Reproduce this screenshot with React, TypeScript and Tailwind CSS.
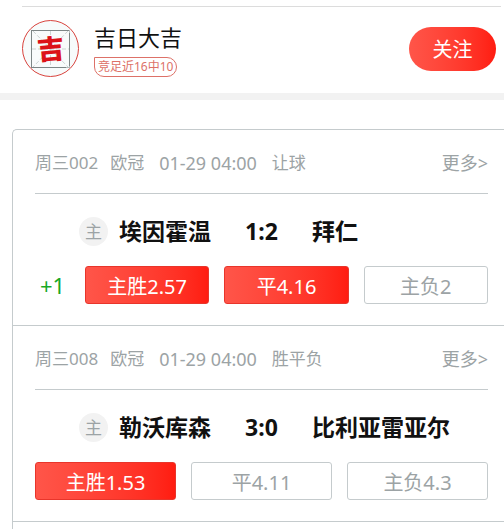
interface Option {
  label: string;
  picked?: boolean;
}

interface Match {
  id: string;
  league: string;
  time: string;
  type: string;
  home: string;
  away: string;
  score: string;
  handicap?: string;
  options: Option[];
}

const matches: Match[] = [
  {
    id: "周三002",
    league: "欧冠",
    time: "01-29 04:00",
    type: "让球",
    home: "埃因霍温",
    away: "拜仁",
    score: "1:2",
    handicap: "+1",
    options: [{ label: "主胜2.57", picked: true }, { label: "平4.16", picked: true }, { label: "主负2" }],
  },
  {
    id: "周三008",
    league: "欧冠",
    time: "01-29 04:00",
    type: "胜平负",
    home: "勒沃库森",
    away: "比利亚雷亚尔",
    score: "3:0",
    options: [{ label: "主胜1.53", picked: true }, { label: "平4.11" }, { label: "主负4.3" }],
  },
];

function Avatar() {
  return (
    <svg viewBox="0 0 57 57" className="w-[57px] h-[57px] shrink-0" role="img" aria-label="吉日大吉">
      <circle cx="28.5" cy="28.5" r="28" fill="#f7fbfb" stroke="#d8433d" />
      {/* practice-paper grid */}
      <rect x="9.5" y="10.5" width="38" height="37" fill="#f8fbfb" stroke="#b4bcbc" />
      <path d="M10 10.5H47M9.5 10V48M10 47.5H44M47.5 13V46" stroke="#7d8686" fill="none" />
      <path d="M10 29H47M28.5 11V47M11 11L46 47M46 11L11 47" stroke="#cbd3d3" strokeDasharray="4 2" fill="none" />
      <text
        x="28.5"
        y="39"
        textAnchor="middle"
        fontSize="27"
        fontWeight="900"
        fill="#dc1218"
        transform="rotate(-5 28.5 28.5)"
      >
        吉
      </text>
    </svg>
  );
}

function OptionButton({ label, picked }: Option) {
  return (
    <button
      type="button"
      className={
        picked
          ? "h-[38px] rounded-[3px] border border-[#e8352b] bg-linear-to-r from-[#ff5549] to-[#ff1c10] pt-1 text-xl leading-none text-white"
          : "h-[38px] rounded-[3px] border border-[#c5cbcd] bg-white pt-1 text-xl leading-none text-[#9ca3a5]"
      }
    >
      {label}
    </button>
  );
}

function MatchRow({ match }: { match: Match }) {
  return (
    <article className="border-b border-[#c5cbcd] pl-[22px] pr-4 pb-[21px]">
      <div className="flex h-16 items-center border-b border-[#c5cbcd] pt-[3px] text-[17px] text-[#9ca3a5]">
        <span>{match.id}</span>
        <span className="ml-3">{match.league}</span>
        <span className="ml-[15px] text-lg">{match.time}</span>
        <span className="ml-[15px]">{match.type}</span>
        <a href="#" className="ml-auto text-lg">更多&gt;</a>
      </div>

      <div className="mt-[23px] flex h-[29px] items-center pl-11 text-[23px] font-bold text-[#111]">
        <span className="flex size-[29px] items-center justify-center rounded-full bg-[#f2f2f2] text-[17px] font-normal text-[#9ca3a5]">
          主
        </span>
        <span className="ml-[11px]">{match.home}</span>
        <span className="w-[101px] text-center">{match.score}</span>
        <span>{match.away}</span>
      </div>

      <div className="mt-5 flex items-center">
        {match.handicap && (
          <span className="w-[50px] shrink-0 pl-[5px] text-[22px] leading-none text-[#18a826]">{match.handicap}</span>
        )}
        <div className="grid flex-1 grid-cols-3 gap-[15px]">
          {match.options.map(option => (
            <OptionButton key={option.label} {...option} />
          ))}
        </div>
      </div>
    </article>
  );
}

export default function App() {
  return (
    <div className="overflow-hidden bg-white font-['Noto_Sans','Noto_Sans_CJK_SC',sans-serif]">
      <header className="border-b-[7px] border-[#f2f2f2] pt-1.5">
        <div className="ml-[22px] mr-[3px] border-t border-[#dcdcdc]" />
        <div className="flex items-center pl-[22px] pr-2 pt-[13px] pb-4">
          <Avatar />
          <div className="ml-[15px] flex flex-col items-start">
            <h1 className="text-[22px] leading-8 text-[#111]">吉日大吉</h1>
            <span className="mt-1 flex h-5 items-center rounded-full rounded-tl-none border border-[#dd7168] px-[3px] text-xs text-[#dd7168]">
              竞足近16中10
            </span>
          </div>
          <button
            type="button"
            className="ml-auto h-11 w-[87px] rounded-full bg-linear-to-r from-[#ff5549] to-[#ff1c10] pt-[3px] text-xl text-white"
          >
            关注
          </button>
        </div>
      </header>

      <main className="ml-3 mt-[29px] rounded-tl-[5px] border-l border-t border-[#c5cbcd] pb-2">
        {matches.map(match => (
          <MatchRow key={match.id} match={match} />
        ))}
      </main>
    </div>
  );
}
